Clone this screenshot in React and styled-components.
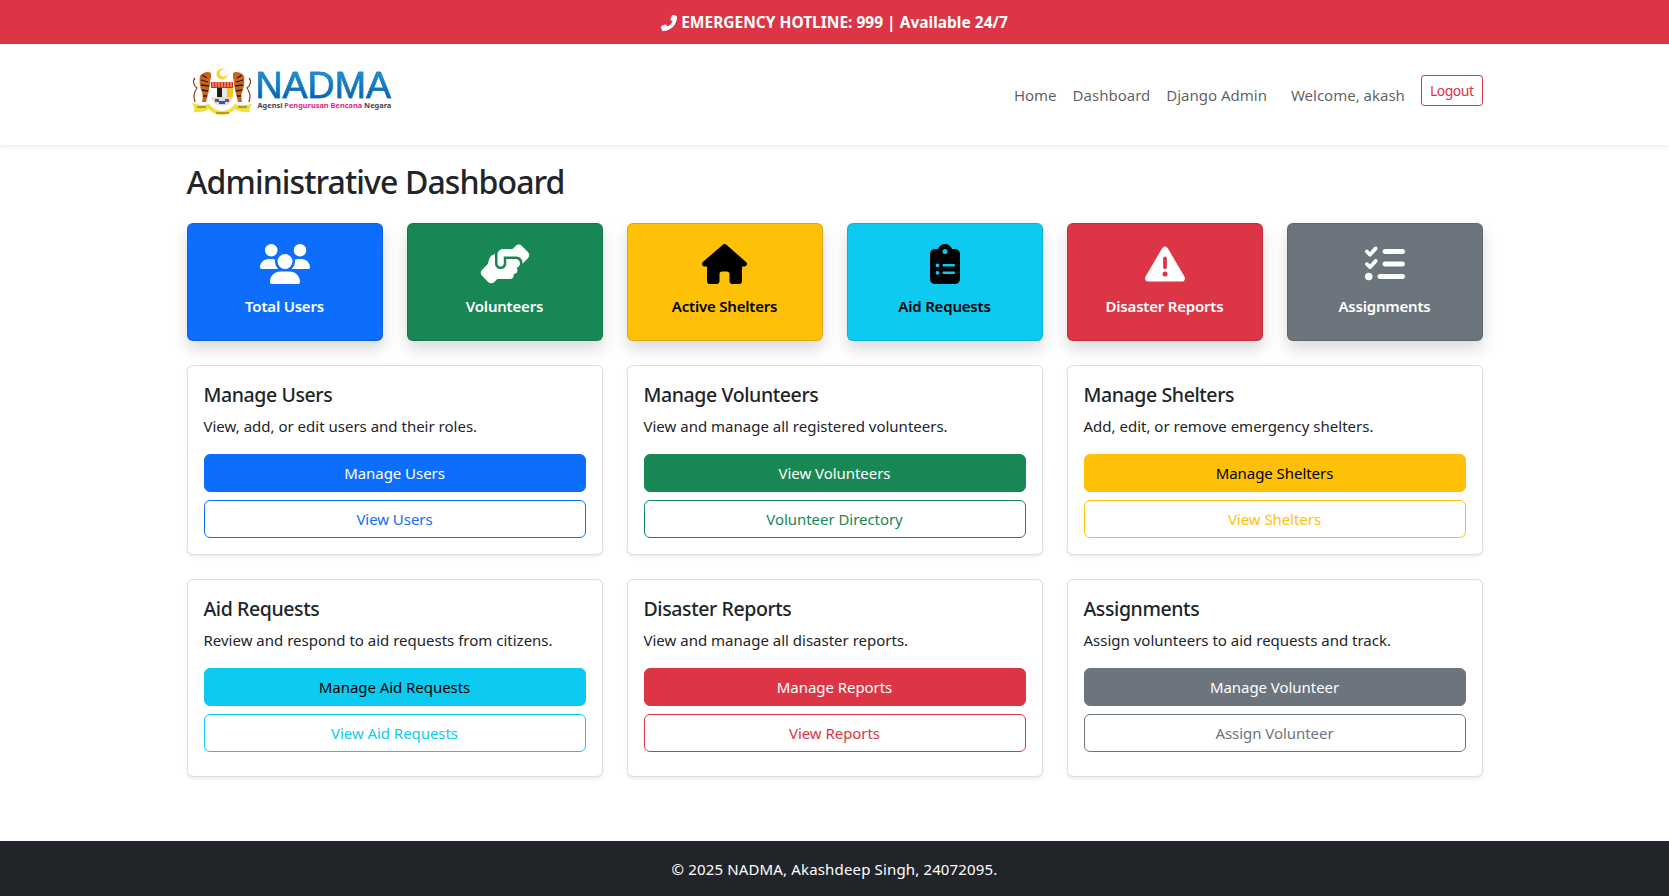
import React from 'react';
import styled, { createGlobalStyle } from 'styled-components';
import { FaUsers, FaHandshakeAngle, FaHouse, FaClipboardList, FaTriangleExclamation, FaListCheck, FaPhoneFlip } from 'react-icons/fa6';

const FONT = '"Noto Sans", "Open Sans", sans-serif';
const COLORS = {
  primary: ['#0d6efd', '#fff'],
  success: ['#198754', '#fff'],
  warning: ['#ffc107', '#000'],
  info: ['#0dcaf0', '#000'],
  danger: ['#dc3545', '#fff'],
  secondary: ['#6c757d', '#fff'],
};

const Global = createGlobalStyle`
  * { box-sizing: border-box; }
  html, body { margin: 0; padding: 0; background: #fff; }
  body { font-family: ${FONT}; font-size: 16px; line-height: 1.5; color: #212529; }
`;
const Page = styled.div`
  min-height: 896px;
  display: flex;
  flex-direction: column;
`;
const Hotline = styled.div`
  height: 44px;
  padding-top: 1px;
  background: #dc3545;
  color: #fff;
  font-weight: 700;
  font-size: 15.5px;
  display: flex;
  align-items: center;
  justify-content: center;
  gap: 4px;
`;
const Navbar = styled.nav`
  height: 101px;
  background: #fff;
  box-shadow: 0 2px 4px rgba(0, 0, 0, 0.075);
  position: relative;
`;
const NavInner = styled.div`
  width: 1296px;
  margin: 0 auto;
  height: 100%;
  display: flex;
  align-items: flex-start;
  justify-content: space-between;
`;
const Brand = styled.div`
  margin-top: 24px;
  margin-left: 4px;
  display: flex;
  align-items: flex-start;
  gap: 3px;
`;
const BrandText = styled.div`
  display: flex;
  flex-direction: column;
  align-items: flex-start;
`;
const BrandName = styled.span`
  display: block;
  margin-top: 1px;
  font-family: "Liberation Sans", sans-serif;
  font-size: 37.5px;
  line-height: 32px;
  background: linear-gradient(180deg, #1c9ad6 0%, #0b5cab 100%);
  -webkit-background-clip: text;
  background-clip: text;
  color: transparent;
  -webkit-text-stroke: 0.5px #1470c2;
`;
const BrandSub = styled.span`
  display: block;
  margin-left: 2px;
  font-size: 7.4px;
  line-height: 9px;
  font-weight: 700;
  color: #444;
  white-space: nowrap;
  em { font-style: normal; color: #e8277f; }
`;
const NavLinks = styled.div`
  display: flex;
  align-items: flex-start;
  margin-top: 30px;
`;
const NavLink = styled.span`
  padding: 10px 8px 6px;
  font-size: 15px;
  color: rgba(0, 0, 0, 0.65);
`;
const Welcome = styled(NavLink)`
  margin-left: 8px;
  margin-right: 8px;
`;
const Logout = styled.button`
  height: 31px;
  padding: 0 8px;
  margin-top: 1px;
  background: #fff;
  border: 1px solid #dc3545;
  border-radius: 3.2px;
  color: #dc3545;
  font: 14px ${FONT};
  letter-spacing: -0.5px;
`;
const Main = styled.main`
  width: 1296px;
  margin: 0 auto;
  padding-top: 18px;
  flex: 1;
`;
const Title = styled.h1`
  margin: 0 0 22px;
  font-size: 32px;
  line-height: 38px;
  font-weight: 500;
  letter-spacing: -0.9px;
`;
const StatGrid = styled.div`
  display: grid;
  grid-template-columns: repeat(6, 196px);
  justify-content: space-between;
  margin-bottom: 24px;
`;
const StatCard = styled.div`
  height: 118px;
  padding: 20px 8px;
  border: 1px solid rgba(0, 0, 0, 0.125);
  border-radius: 6px;
  box-shadow: 0 8px 16px rgba(0, 0, 0, 0.15);
  background: ${p => COLORS[p.$tone][0]};
  color: ${p => COLORS[p.$tone][1]};
  display: flex;
  flex-direction: column;
  align-items: center;
  gap: 10px;
  svg { display: block; height: 40px; width: ${p => p.$iconWidth}px; }
`;
const StatLabel = styled.div`
  font-size: 15px;
  line-height: 24px;
  font-weight: 600;
  letter-spacing: -0.2px;
`;
const CardGrid = styled.div`
  display: grid;
  grid-template-columns: repeat(3, 416px);
  justify-content: space-between;
  row-gap: 24px;
`;
const Card = styled.div`
  padding: 16px 16px ${p => (p.$tall ? '24px' : '16px')};
  background: #fff;
  border: 1px solid rgba(0, 0, 0, 0.125);
  border-radius: 6px;
  box-shadow: 0 2px 4px rgba(0, 0, 0, 0.075);
  display: flex;
  flex-direction: column;
`;
const CardTitle = styled.h5`
  margin: 1px 0 7px;
  font-size: 19.5px;
  line-height: 24px;
  font-weight: 500;
  letter-spacing: -0.4px;
`;
const CardText = styled.p`
  margin: 0 0 16px;
  font-size: 15px;
  line-height: 24px;
`;
const Btn = styled.button`
  height: 38px;
  border-radius: 6px;
  border: 1px solid ${p => COLORS[p.$tone][0]};
  background: ${p => (p.$outline ? '#fff' : COLORS[p.$tone][0])};
  color: ${p => (p.$outline ? COLORS[p.$tone][0] : COLORS[p.$tone][1])};
  font: 15px ${FONT};
  letter-spacing: -0.05px;
  & + & { margin-top: 8px; }
`;
const Footer = styled.footer`
  height: 55px;
  padding-top: 2px;
  margin-top: 64px;
  background: #212529;
  color: #fff;
  font-size: 15px;
  letter-spacing: 0.15px;
  display: flex;
  align-items: center;
  justify-content: center;
`;

const Tiger = ({ mirror }) => (
  <g transform={mirror ? 'translate(62,0) scale(-1,1)' : undefined}>
    <path d="M4 34 C2 28 3 24 6 20 C3 18 1 13 4 10" fill="none" stroke="#8a3a12" strokeWidth="1.2" />
    <path d="M9 8 C12 4 17 3 20 5 L20 9 C19 13 19 17 18 22 C17 26 16 30 15 34 L11 34 C12 29 12 26 10 22 C9 18 8 13 9 8 Z" fill="#c8641e" />
    <path d="M11 7l5 3M10 12l7 2M10 17l8 1M11 22l6 1M12 28l4 0" stroke="#2b1a12" strokeWidth="1.3" />
  </g>
);

const Crest = () => (
  <svg width="62" height="48" viewBox="0 0 62 48" aria-hidden="true">
    <circle cx="31" cy="6" r="5.5" fill="#f5d33a" />
    <circle cx="32.5" cy="5" r="3.6" fill="#fff" />
    <Tiger />
    <Tiger mirror />
    <rect x="20" y="14" width="22" height="6" fill="#d7262c" />
    <path d="M22 14v5M25 14v5M28 14v5M31 14v5M34 14v5M37 14v5M40 14v5" stroke="#f6e27a" strokeWidth="1" />
    <path d="M20 20 H26 V29 H20 Z" fill="#fff" />
    <path d="M26 20 H31 V31 H26 Z" fill="#1d1d1d" />
    <path d="M31 20 H36 V31 H31 Z" fill="#e9e9e4" />
    <path d="M36 20 H42 V29 H36 Z" fill="#f2c71e" />
    <path d="M20 29 H42 L38 36 Q31 39 24 36 Z" fill="#d8dce0" />
    <path d="M24 31h4v3h-4zM34 31h4v3h-4z" fill="#b23a48" />
    <path d="M28 33h6v3h-6z" fill="#2a5ea8" />
    <path d="M1 35 C8 37 12 38 18 36 C22 41 27 43 31 43 C35 43 40 41 44 36 C50 38 54 37 61 36 C59 39 58 41 59 44 C52 45 48 43 44 41 C40 45 36 47 31 47 C26 47 21 45 18 41 C14 43 9 45 3 44 C4 41 3 38 1 35 Z" fill="#f3de3a" />
    <path d="M6 39 H15 M25 45 H38 M47 39 H56" stroke="#6a5a18" strokeWidth="1" />
  </svg>
);

const stats = [
  ['primary', FaUsers, 'Total Users', 50],
  ['success', FaHandshakeAngle, 'Volunteers', 50],
  ['warning', FaHouse, 'Active Shelters', 45],
  ['info', FaClipboardList, 'Aid Requests', 30],
  ['danger', FaTriangleExclamation, 'Disaster Reports', 40],
  ['secondary', FaListCheck, 'Assignments', 40],
];
const cards = [
  ['primary', 'Manage Users', 'View, add, or edit users and their roles.', 'Manage Users', 'View Users'],
  ['success', 'Manage Volunteers', 'View and manage all registered volunteers.', 'View Volunteers', 'Volunteer Directory'],
  ['warning', 'Manage Shelters', 'Add, edit, or remove emergency shelters.', 'Manage Shelters', 'View Shelters'],
  ['info', 'Aid Requests', 'Review and respond to aid requests from citizens.', 'Manage Aid Requests', 'View Aid Requests'],
  ['danger', 'Disaster Reports', 'View and manage all disaster reports.', 'Manage Reports', 'View Reports'],
  ['secondary', 'Assignments', 'Assign volunteers to aid requests and track.', 'Manage Volunteer', 'Assign Volunteer'],
];

export default function App() {
  return (
    <Page>
      <Global />
      <Hotline><FaPhoneFlip size={16} /> EMERGENCY HOTLINE: 999 | Available 24/7</Hotline>
      <Navbar>
        <NavInner>
          <Brand>
            <Crest />
            <BrandText>
              <BrandName>NADMA</BrandName>
              <BrandSub>Agensi <em>Pengurusan Bencana</em> Negara</BrandSub>
            </BrandText>
          </Brand>
          <NavLinks>
            <NavLink>Home</NavLink>
            <NavLink>Dashboard</NavLink>
            <NavLink>Django Admin</NavLink>
            <Welcome>Welcome, akash</Welcome>
            <Logout>Logout</Logout>
          </NavLinks>
        </NavInner>
      </Navbar>
      <Main>
        <Title>Administrative Dashboard</Title>
        <StatGrid>
          {stats.map(([tone, Icon, label, width]) => (
            <StatCard key={label} $tone={tone} $iconWidth={width}>
              <Icon />
              <StatLabel>{label}</StatLabel>
            </StatCard>
          ))}
        </StatGrid>
        <CardGrid>
          {cards.map(([tone, title, text, a, b], i) => (
            <Card key={title} $tall={i >= 3}>
              <CardTitle>{title}</CardTitle>
              <CardText>{text}</CardText>
              <Btn $tone={tone}>{a}</Btn>
              <Btn $tone={tone} $outline>{b}</Btn>
            </Card>
          ))}
        </CardGrid>
      </Main>
      <Footer>© 2025 NADMA, Akashdeep Singh, 24072095.</Footer>
    </Page>
  );
}
